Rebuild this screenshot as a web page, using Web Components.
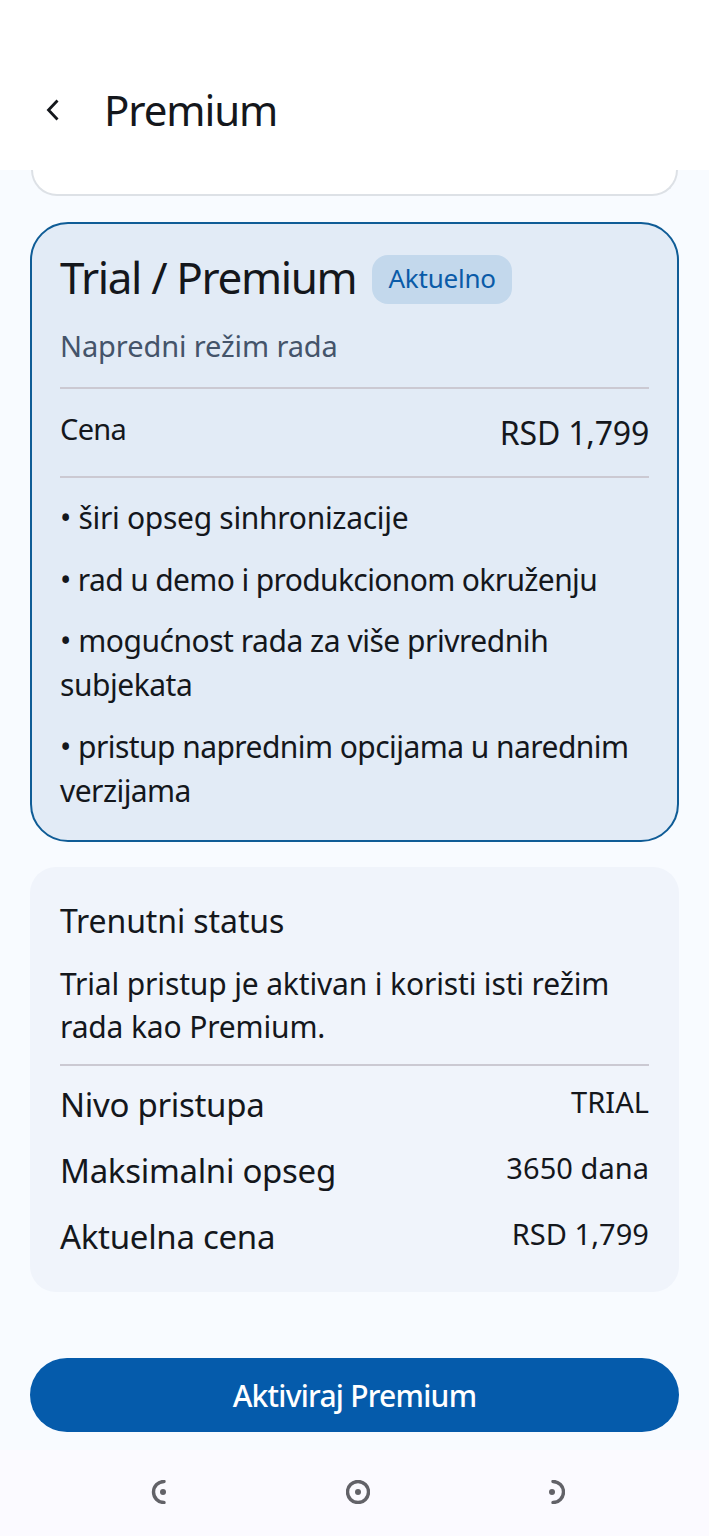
<!DOCTYPE html>
<html lang="sr">
<head>
<meta charset="utf-8">
<title>Premium</title>
<style>
  html, body { margin: 0; height: 100%; }
  body {
    width: 709px; height: 1536px; overflow: hidden;
    display: flex; flex-direction: column;
    background: #f8fbff; color: #14171c;
    font-family: "Noto Sans", "Open Sans", sans-serif;
  }
</style>
</head>
<body>
<app-header>Premium</app-header>
<page-content>
  <clipped-card></clipped-card>
  <plan-card title="Trial / Premium" badge="Aktuelno" subtitle="Napredni režim rada" label="Cena" price="RSD 1,799">
    <li>• širi opseg sinhronizacije</li>
    <li>• rad u demo i produkcionom okruženju</li>
    <li>• mogućnost rada za više privrednih subjekata</li>
    <li>• pristup naprednim opcijama u narednim verzijama</li>
  </plan-card>
  <status-card title="Trenutni status" text="Trial pristup je aktivan i koristi isti režim rada kao Premium.">
    <status-row label="Nivo pristupa" value="TRIAL"></status-row>
    <status-row label="Maksimalni opseg" value="3650 dana"></status-row>
    <status-row label="Aktuelna cena" value="RSD 1,799"></status-row>
  </status-card>
  <primary-button>Aktiviraj Premium</primary-button>
</page-content>
<nav-bar></nav-bar>

<script>
// Top bar with back arrow
class AppHeader extends HTMLElement {
  constructor () {
    super();
    this.attachShadow({ mode: 'open' }).innerHTML = `
      <style>
        :host { display: flex; align-items: center; flex: none; height: 170px; padding: 50px 0 0 44px; box-sizing: border-box; background: #fff; position: relative; z-index: 1; }
        svg { width: 18px; height: 24px; display: block; }
        span { margin-left: 42px; font-size: 42px; letter-spacing: -1.1px; line-height: 50px; }
      </style>
      <svg viewBox="0 0 18 24" fill="none" stroke="#14171c" stroke-width="2.8"><path d="M13.5 2.500 4.500 12l9 9.500"/></svg>
      <span><slot></slot></span>`;
  }
}
customElements.define('app-header', AppHeader);

class PageContent extends HTMLElement {
  constructor () {
    super();
    this.attachShadow({ mode: 'open' }).innerHTML = `
      <style>
        :host { display: flex; flex-direction: column; flex: 1; min-height: 0; padding: 0 30px; overflow: hidden; }
      </style>
      <slot></slot>`;
  }
}
customElements.define('page-content', PageContent);

// Bottom of the card scrolled away under the header
class ClippedCard extends HTMLElement {
  constructor () {
    super();
    this.attachShadow({ mode: 'open' }).innerHTML = `
      <style>
        :host { display: block; flex: none; height: 26px; margin: 0 1px 26px; box-sizing: border-box; background: #fff; border: 2px solid #dde1e6; border-top: 0; border-radius: 0 0 42px 42px; }
      </style>`;
  }
}
customElements.define('clipped-card', ClippedCard);

class PlanCard extends HTMLElement {
  constructor () {
    super();
    const a = n => this.getAttribute(n);
    this.attachShadow({ mode: 'open' }).innerHTML = `
      <style>
        :host { display: block; flex: none; height: 620px; box-sizing: border-box; padding: 31px 28px 0; background: #e2ebf6; border: 2px solid #0f5c96; border-radius: 38px; }
        .head { display: flex; align-items: flex-start; height: 50px; }
        h2 { margin: -3px 0 0; font-size: 44px; font-weight: 400; letter-spacing: -1.35px; line-height: 50px; }
        .badge { margin-left: 16px; padding: 0 16px; height: 49px; line-height: 47px; border-radius: 16px; background: #c3d8ec; color: #0a5ba8; font-size: 26px; letter-spacing: -.2px; }
        .sub { margin-top: 21px; font-size: 29px; line-height: 40px; color: #44546a; letter-spacing: -.1px; }
        .price { display: flex; justify-content: space-between; align-items: center; margin-top: 21px; height: 91px; box-sizing: border-box; border-top: 2px solid #cbc9d2; border-bottom: 2px solid #cbc9d2; font-size: 29px; letter-spacing: -.4px; }
        .price span { padding-bottom: 8px; letter-spacing: -.7px; }
        .price b { font-weight: 400; font-size: 32px; letter-spacing: -.2px; padding-bottom: 1px; }
        ul { display: flex; flex-direction: column; gap: 17.5px; list-style: none; margin: 18px 0 0; padding: 0; }
        ::slotted(li) { font-size: 30px; line-height: 44px; letter-spacing: -.55px; }
        ::slotted(li:nth-child(1)) { letter-spacing: -.3px; }
        ::slotted(li:nth-child(2)) { letter-spacing: -.63px; }
        ::slotted(li:nth-child(3)) { letter-spacing: -.47px; }
      </style>
      <div class="head"><h2>${a('title')}</h2><span class="badge">${a('badge')}</span></div>
      <div class="sub">${a('subtitle')}</div>
      <div class="price"><span>${a('label')}</span><b>${a('price')}</b></div>
      <ul><slot></slot></ul>`;
  }
}
customElements.define('plan-card', PlanCard);

class StatusCard extends HTMLElement {
  constructor () {
    super();
    const a = n => this.getAttribute(n);
    this.attachShadow({ mode: 'open' }).innerHTML = `
      <style>
        :host { display: block; flex: none; height: 425px; margin-top: 25px; box-sizing: border-box; padding: 34px 30px 0; background: #f0f4fb; border-radius: 26px; }
        h3 { margin: 0; font-size: 32px; font-weight: 400; line-height: 40px; letter-spacing: -.1px; }
        p { margin: 21px 0 0; font-size: 30px; line-height: 43px; letter-spacing: -.15px; }
        .rows { display: flex; flex-direction: column; margin-top: 16px; padding-top: 7px; border-top: 2px solid #cbc9d2; }
      </style>
      <h3>${a('title')}</h3>
      <p>${a('text')}</p>
      <div class="rows"><slot></slot></div>`;
  }
}
customElements.define('status-card', StatusCard);

class StatusRow extends HTMLElement {
  constructor () {
    super();
    const a = n => this.getAttribute(n);
    this.attachShadow({ mode: 'open' }).innerHTML = `
      <style>
        :host { display: flex; justify-content: space-between; height: 66px; letter-spacing: -.3px; }
        .l { font-size: 33px; line-height: 64px; }
        .v { font-size: 29px; line-height: 58px; letter-spacing: .05px; }
      </style>
      <span class="l">${a('label')}</span><span class="v">${a('value')}</span>`;
  }
}
customElements.define('status-row', StatusRow);

class PrimaryButton extends HTMLElement {
  constructor () {
    super();
    this.attachShadow({ mode: 'open' }).innerHTML = `
      <style>
        :host { display: flex; align-items: center; justify-content: center; flex: none; height: 74px; margin-top: 66px; border-radius: 37px; background: #055bab; color: #fff; font-size: 30px; font-weight: 500; letter-spacing: -.75px; }
      </style>
      <slot></slot>`;
  }
}
customElements.define('primary-button', PrimaryButton);

// Android navigation buttons
class NavBar extends HTMLElement {
  constructor () {
    super();
    this.attachShadow({ mode: 'open' }).innerHTML = `
      <style>
        :host { display: flex; align-items: center; flex: none; height: 86px; padding: 0 0 2px 150px; box-sizing: border-box; background: #fbfaff; }
        svg { width: 24px; height: 24px; display: block; fill: none; stroke: #626268; stroke-width: 3.4; stroke-linecap: round; }
        circle.dot { fill: #626268; stroke: none; }
        .mid { margin-left: 172px; }
        .right { margin-left: 171px; }
      </style>
      <svg viewBox="0 0 24 24"><path d="M14 1.500a10.500 10.500 0 0 0 0 21"/><circle class="dot" cx="13" cy="12" r="3"/></svg>
      <svg class="mid" viewBox="0 0 24 24"><circle cx="12" cy="12" r="10.500"/><circle class="dot" cx="12" cy="12" r="3"/></svg>
      <svg class="right" viewBox="0 0 24 24"><path d="M12 1.500a10.500 10.500 0 0 1 0 21"/><circle class="dot" cx="11" cy="12" r="3"/></svg>`;
  }
}
customElements.define('nav-bar', NavBar);
</script>
</body>
</html>
